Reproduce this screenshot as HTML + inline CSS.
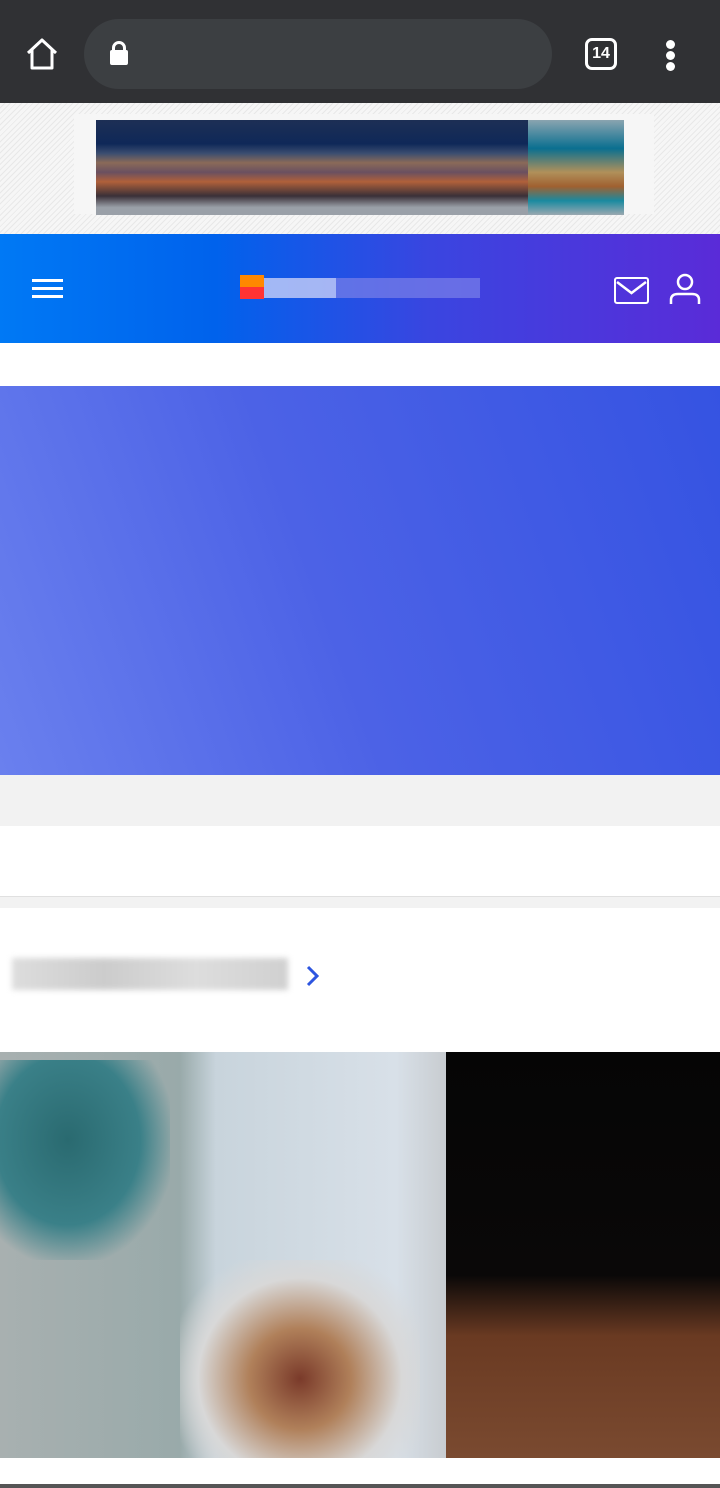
<!DOCTYPE html>
<html><head><meta charset="utf-8"><style>
*{margin:0;padding:0;box-sizing:border-box}
body{width:720px;height:1488px;overflow:hidden;background:#fff;font-family:"Liberation Sans",sans-serif;position:relative}
.abs{position:absolute}
</style></head><body>
<div class="abs" style="left:0;top:0;width:720px;height:103px;background:#303134"></div>
<svg class="abs" style="left:24px;top:36px" width="36" height="36" viewBox="0 0 36 36"><path d="M4 17 L18 4 L32 17 M8 14 V32 H28 V14" fill="none" stroke="#fff" stroke-width="3" stroke-linejoin="round"/></svg>
<div class="abs" style="left:84px;top:19px;width:468px;height:70px;border-radius:35px;background:#3c3f42"></div>
<div class="abs" style="left:110px;top:50px;width:18px;height:15px;background:#fff;border-radius:2px"></div>
<div class="abs" style="left:112px;top:41px;width:14px;height:14px;border:3px solid #fff;border-radius:7px 7px 0 0"></div>
<div class="abs" style="left:585px;top:38px;width:32px;height:32px;border:3px solid #fff;border-radius:7px;color:#fff;font-size:16px;font-weight:bold;text-align:center;line-height:26px">14</div>
<div class="abs" style="left:666px;top:40px;width:9px;height:9px;border-radius:50%;background:#fff"></div>
<div class="abs" style="left:666px;top:51px;width:9px;height:9px;border-radius:50%;background:#fff"></div>
<div class="abs" style="left:666px;top:62px;width:9px;height:9px;border-radius:50%;background:#fff"></div>
<div class="abs" style="left:0;top:103px;width:720px;height:131px;background:repeating-linear-gradient(135deg,#f6f6f6 0 3px,#e8e8e8 3px 4px)"></div>
<div class="abs" style="left:74px;top:114px;width:580px;height:100px;background:#f6f6f6"></div>
<div class="abs" style="left:96px;top:120px;width:528px;height:95px;background:linear-gradient(180deg,#1d2f55 0,#0f2858 25%,#3a4d70 35%,#8a6a58 45%,#6a5060 55%,#b0603a 65%,#3a3038 80%,#9aa0a8 92%)"></div>
<div class="abs" style="left:528px;top:120px;width:96px;height:95px;background:linear-gradient(180deg,#8aa4b0,#0a6f90 30%,#b0905a 55%,#a06030 70%,#1a8aa0 85%,#9aa8b0)"></div>
<div class="abs" style="left:0;top:234px;width:720px;height:109px;background:linear-gradient(90deg,#0079f5 0%,#0062ec 30%,#3a45e0 60%,#5a2bd8 100%)"></div>
<div class="abs" style="left:32px;top:279px;width:31px;height:3px;background:#fff;box-shadow:0 8px 0 #fff,0 16px 0 #fff"></div>
<div class="abs" style="left:240px;top:275px;width:24px;height:12px;background:#f80"></div>
<div class="abs" style="left:240px;top:287px;width:24px;height:12px;background:#f33"></div>
<div class="abs" style="left:264px;top:278px;width:72px;height:20px;background:#c8d0f8;opacity:.8"></div>
<div class="abs" style="left:336px;top:278px;width:144px;height:20px;background:#7a80e8;opacity:.7"></div>
<div class="abs" style="left:614px;top:277px;width:35px;height:27px;border:2.5px solid #fff;border-radius:3px"></div>
<svg class="abs" style="left:614px;top:277px" width="35" height="27"><path d="M3 5 L17.5 16 L32 5" fill="none" stroke="#fff" stroke-width="2.5"/></svg>
<svg class="abs" style="left:668px;top:272px" width="34" height="34"><circle cx="17" cy="10" r="7" fill="none" stroke="#fff" stroke-width="2.5"/><path d="M3 32 V28 Q3 22 10 22 H24 Q31 22 31 28 V32" fill="none" stroke="#fff" stroke-width="2.5"/></svg>
<div class="abs" style="left:0;top:386px;width:720px;height:389px;background:linear-gradient(70deg,#6a80ee 0%,#4c62e6 45%,#3553e2 100%)"></div>
<div class="abs" style="left:0;top:775px;width:720px;height:51px;background:#f2f2f2"></div>
<div class="abs" style="left:0;top:896px;width:720px;height:12px;background:#f2f2f2;border-top:1px solid #e0e0e0"></div>
<div class="abs" style="left:12px;top:958px;width:276px;height:32px;background:linear-gradient(90deg,#ddd,#ccc,#ddd,#d0d0d0);filter:blur(3px)"></div>
<svg class="abs" style="left:304px;top:964px" width="18" height="24"><path d="M4 3 L13 12 L4 21" fill="none" stroke="#2d55e0" stroke-width="3"/></svg>
<div class="abs" style="left:0;top:1052px;width:720px;height:406px;background:linear-gradient(90deg,#a8b0b0 0,#9aa 25%,#c8d4dc 30%,#d8e0e8 55%,#c8ccd0 62%,transparent 62%)"></div>
<div class="abs" style="left:0;top:1060px;width:170px;height:200px;background:radial-gradient(ellipse at 40% 40%,#2a6a70,#3a8088 50%,transparent 75%)"></div>
<div class="abs" style="left:446px;top:1052px;width:274px;height:406px;background:linear-gradient(180deg,#050505 0,#0a0808 55%,#6a3a22 70%,#7a4a30 100%)"></div>
<div class="abs" style="left:180px;top:1260px;width:240px;height:198px;background:radial-gradient(ellipse at 50% 60%,#7a3a2a,#b0805a 30%,#d8d8d8 60%,transparent 80%)"></div>
<div class="abs" style="left:0;top:1484px;width:720px;height:4px;background:#555"></div>
</body></html>
